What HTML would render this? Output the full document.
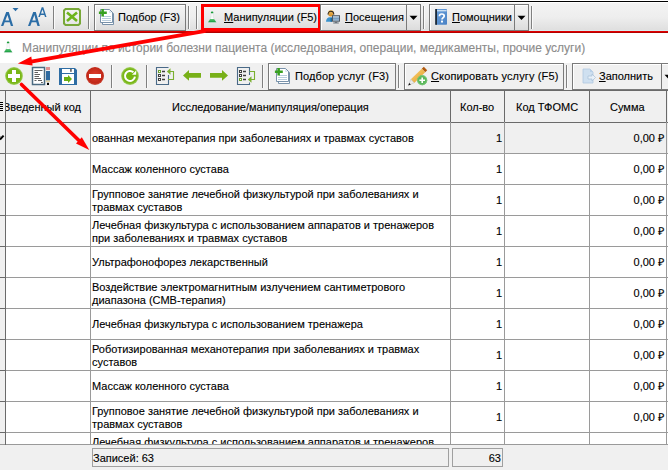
<!DOCTYPE html>
<html><head><meta charset="utf-8">
<style>
*{margin:0;padding:0;box-sizing:border-box}
html,body{width:668px;height:470px;overflow:hidden;background:#fff}
body{position:relative;font-family:"Liberation Sans",sans-serif;font-size:11px;color:#000}
.a{position:absolute}
#tb1{left:0;top:3px;width:668px;height:28px;background:linear-gradient(#f3f3f3,#eeeeee 50%,#dedede)}
.sep{position:absolute;background:#808080;border-right:1px solid #fafafa;width:2px}
.btn{position:absolute;border:1px solid #7a7a7a;background:linear-gradient(#f4f4f4,#ebebeb 50%,#dcdcdc);box-shadow:inset 1px 1px 0 #fff}
.t{position:absolute;white-space:pre;line-height:13px;-webkit-text-stroke-width:0.12px}
u{text-decoration:underline;text-decoration-thickness:1px;text-underline-offset:1px}
#grid{left:0;top:90px;width:668px;height:355px;overflow:hidden}
.hl{position:absolute;left:0;width:668px;height:1px;background:#9a9a9a}
.vl{position:absolute;top:0;width:1px;height:355px}
</style></head><body>
<!-- top border -->
<div class="a" style="left:0;top:1px;width:668px;height:1px;background:#000"></div>
<div class="a" id="tb1"></div>
<div class="a" style="left:0;top:30px;width:668px;height:1px;background:#d6ecee"></div>
<div class="a" style="left:0;top:31px;width:668px;height:1px;background:#e00000"></div>
<div class="a" style="left:0;top:32px;width:668px;height:1px;background:#b40000"></div>

<!-- toolbar 1 -->
<svg class="a" style="left:0;top:0" width="90" height="31">
<path fill="#2b6da6" fill-rule="evenodd" d="M1 26L6.2 12H8.8L13.2 26H10.9L9.7 22.2H4.7L3.3 26ZM5.3 20.6H9.2L7.42 14.9Z"/>
<path fill="#2b6da6" d="M12.5 8H18.5L15.5 11.2Z"/>
<path fill="#2b6da6" fill-rule="evenodd" d="M28 26L33.2 12H35.8L39.8 26H37.5L36.3 22.2H31.7L30.3 26ZM32.3 20.6H35.8L34.4 14.9Z"/>
<path fill="#2b6da6" fill-rule="evenodd" d="M38.3 17L41.7 7.3H43.3L46.5 17H45L44.3 14.9H40.6L39.8 17ZM41 13.6H43.9L42.5 9.4Z"/>
<path fill="none" stroke="#78a838" stroke-width="2" d="M65.5 9H78.5L80 10.5V23.5L78.5 25H65.5L64 23.5V10.5Z"/>
<path fill="none" stroke="#6cb41c" stroke-width="2.6" d="M67 12.5L77 21M77 12.5L67 21"/>
</svg>
<div class="sep" style="left:53px;top:6px;height:23px"></div>
<div class="sep" style="left:88px;top:6px;height:23px"></div>

<div class="btn" style="left:94px;top:4px;width:92px;height:27px"></div>
<svg class="a" style="left:97px;top:6px" width="20" height="22">
<path fill="#fff" stroke="#6a86a0" stroke-width="0.9" d="M5.5 5.5H14.5L16.5 7.5V18.5H5.5Z"/>
<path fill="#fff" stroke="#6a86a0" stroke-width="0.9" d="M3.5 3.5H12.5L15.5 6.5V16.5H3.5Z"/>
<path fill="#dce8f0" d="M12 4L15 7H12Z"/>
<path stroke="#b8ccdc" d="M6 10.5H14M5 12.5H14M5 14.5H14"/>
<path fill="#38a020" d="M4.4 3H6.9V5.6H9.8V8.1H6.9V10.6H4.4V8.1H1.9V5.6H4.4Z"/>
</svg>
<div class="t" style="left:118px;top:11px">Подбор (F3)</div>
<div class="sep" style="left:188px;top:6px;height:23px"></div>
<div class="sep" style="left:196px;top:6px;height:23px"></div>

<div class="btn" style="left:201px;top:4px;width:120px;height:27px;border:3px solid #ff0000;box-shadow:none"></div>
<svg class="a" style="left:204px;top:8px" width="16" height="18">
<defs><linearGradient id="fg1" x1="0" y1="0" x2="0" y2="1"><stop offset="0" stop-color="#60c878"/><stop offset="1" stop-color="#109a3a"/></linearGradient></defs>
<path fill="#fff" stroke="#d4dcdc" stroke-width="0.6" d="M7.1 5V9.2L4.2 14.4H12.2L9.1 9.2V5"/>
<ellipse cx="8.1" cy="4.4" rx="1.3" ry="0.9" fill="#1a9a3a"/>
<path fill="url(#fg1)" d="M6.1 11H10.1L12.3 14.3H4.1Z"/>
</svg>
<div class="t" style="left:224px;top:11px"><u>М</u>анипуляции (F5)</div>

<div class="btn" style="left:320px;top:4px;width:101px;height:27px"></div>
<div class="a" style="left:406px;top:4px;width:1px;height:27px;background:#7a7a7a"></div>
<svg class="a" style="left:322px;top:6px" width="22" height="22">
<defs><linearGradient id="face" x1="0" y1="0" x2="0" y2="1"><stop offset="0" stop-color="#f4c870"/><stop offset="1" stop-color="#d08a20"/></linearGradient>
<linearGradient id="scr" x1="0" y1="0" x2="0" y2="1"><stop offset="0" stop-color="#c8dcec"/><stop offset="0.5" stop-color="#7aa0c0"/><stop offset="1" stop-color="#a8c4dc"/></linearGradient></defs>
<path fill="#3a92cc" d="M4 15.8C4 13 5.5 11.4 8 11.3H10V15.8Z"/>
<path fill="#1e6a9a" d="M8.5 12H10V15.8H8.5Z"/>
<ellipse cx="8.9" cy="7.2" rx="2.9" ry="3.2" fill="url(#face)"/>
<path fill="none" stroke="#2a2420" stroke-width="1.1" d="M6 8.6A2.9 3.3 0 0 1 11.8 8.6"/>
<rect x="10" y="9.2" width="8" height="6.5" fill="#505a64"/>
<rect x="11" y="10.2" width="6" height="4.5" fill="url(#scr)"/>
<path fill="#6a747c" d="M12.8 15.7H15.2V16.6H16.8V17.6H11.2V16.6H12.8Z"/>
</svg>
<div class="t" style="left:345px;top:11px"><u>П</u>осещения</div>
<svg class="a" style="left:409px;top:15px" width="9" height="6"><path d="M0.5 0.8H8.5L4.5 5Z" fill="#000"/></svg>
<div class="sep" style="left:423px;top:6px;height:23px"></div>
<div class="btn" style="left:429px;top:4px;width:100px;height:27px"></div>
<div class="a" style="left:514px;top:4px;width:1px;height:27px;background:#7a7a7a"></div>
<svg class="a" style="left:434px;top:8px" width="14" height="18">
<defs><linearGradient id="bk" x1="0" y1="0" x2="1" y2="1"><stop offset="0" stop-color="#6aa0dc"/><stop offset="1" stop-color="#4a82c4"/></linearGradient></defs>
<rect x="1.5" y="1" width="11.5" height="15.8" rx="0.8" fill="url(#bk)"/>
<rect x="1.2" y="1" width="1.8" height="15.8" fill="#1e2a36"/>
<rect x="3" y="2.2" width="9.6" height="1.1" fill="#e0eef8"/>
<path fill="none" stroke="#fff" stroke-width="1.7" d="M5.4 8.2C5.4 6.6 6.4 6 7.8 6S10.2 6.8 10.2 8C10.2 9.6 8 9.6 8 11.6"/>
<rect x="7" y="12.6" width="2" height="1.9" fill="#fff"/>
</svg>
<div class="t" style="left:452px;top:11px"><u>П</u>омощники</div>
<svg class="a" style="left:517px;top:15px" width="9" height="6"><path d="M0.5 0.8H8.5L4.5 5Z" fill="#000"/></svg>
<div class="sep" style="left:531px;top:6px;height:23px"></div>

<!-- title -->
<svg class="a" style="left:0px;top:38px" width="16" height="18">
<defs><linearGradient id="fg2" x1="0" y1="0" x2="0" y2="1"><stop offset="0" stop-color="#60c878"/><stop offset="1" stop-color="#109a3a"/></linearGradient></defs>
<path fill="#fff" stroke="#d4dcdc" stroke-width="0.6" d="M7.1 5V9.2L4.2 14.4H12.2L9.1 9.2V5"/>
<ellipse cx="8.1" cy="4.4" rx="1.3" ry="0.9" fill="#1a9a3a"/>
<path fill="url(#fg2)" d="M6.1 11H10.1L12.3 14.3H4.1Z"/>
</svg>
<div class="t" style="left:22px;top:41px;font-size:12px;line-height:14px;color:#8c8c8c">Манипуляции по истории болезни пациента (исследования, операции, медикаменты, прочие услуги)</div>

<!-- toolbar 2 -->
<div class="a" style="left:0;top:63px;width:668px;height:27px;background:#f0f0f0"></div>
<svg class="a" style="left:0;top:63px" width="262" height="27">
<defs>
<radialGradient id="gg" cx="0.5" cy="0.5" r="0.5"><stop offset="0" stop-color="#74b80c"/><stop offset="0.8" stop-color="#7ab618"/><stop offset="1" stop-color="#a0d060"/></radialGradient>
<radialGradient id="rg" cx="0.5" cy="0.45" r="0.55"><stop offset="0" stop-color="#e04030"/><stop offset="0.8" stop-color="#c02818"/><stop offset="1" stop-color="#d05040"/></radialGradient>
</defs>
<circle cx="14" cy="13" r="8.9" fill="url(#gg)"/>
<path fill="#fff" d="M12 7H16V11H20V15H16V19H12V15H8V11H12Z"/>
<rect x="32.5" y="4.5" width="12" height="17" fill="#fff" stroke="#4a6a80" stroke-width="1.5"/>
<path stroke="#606060" stroke-width="1" d="M34.5 7.5H42.5M34.5 9.5H38M34.5 11.5H40M34.5 13.5H39M34.5 15.5H41M34.5 17.5H36.5M38 17.5H42M41 19.5H42.8"/>
<rect x="46" y="4" width="4" height="3" fill="#e09090"/>
<rect x="46" y="8" width="4" height="9.5" fill="#2e6aa0"/>
<path fill="#e0d0a0" d="M46 17.5H50V19H46Z"/>
<rect x="47" y="19.8" width="2" height="2.2" fill="#000"/>
<path fill="#2e6da4" d="M59 5H75L77 7V22H59Z"/>
<rect x="62" y="6" width="12" height="4" fill="#fff"/>
<rect x="62" y="11" width="12" height="10" fill="#fff"/>
<rect x="70" y="6" width="1.8" height="2.8" fill="#707070"/>
<path fill="#6ab010" d="M64 14H68V12L72 16L68 20V18H64Z"/>
<circle cx="95" cy="13" r="9" fill="url(#rg)"/>
<rect x="89" y="11" width="12" height="4" fill="#fff"/>
<circle cx="130" cy="13" r="8.9" fill="url(#gg)"/>
<path fill="none" stroke="#fff" stroke-width="2" d="M134.95 13.7A5 5 0 1 1 133.4 9.3"/>
<path fill="#fff" d="M136.2 7.6V11.8H132Z"/>
<path fill="none" stroke="#4a6a88" stroke-width="1.1" d="M168.5 4.5H156.5V21.5H168.5V12"/>
<rect x="158.5" y="7.5" width="2" height="2" fill="#fff" stroke="#6aa030" stroke-width="1"/>
<rect x="158.5" y="11.5" width="2" height="2" fill="#fff" stroke="#404040" stroke-width="1"/>
<rect x="158.5" y="15.5" width="2" height="2" fill="#fff" stroke="#404040" stroke-width="1"/>
<path stroke="#404040" stroke-width="1.3" d="M162 8.5H165M162 12.5H165M162 16.5H165"/>
<path fill="none" stroke="#7ab030" stroke-width="1.1" d="M170 8.5H173.5V16.5H168"/>
<path fill="#7ab030" d="M166.8 8.5L170.5 5.3V11.7Z"/>
<path fill="#78b018" d="M183 12.4L189 7V10.1H201V14.8H189V17.8Z"/>
<path fill="#78b018" d="M228 12.4L222 7V10.1H210V14.8H222V17.8Z"/>
<path fill="none" stroke="#4a6a88" stroke-width="1.1" d="M249.5 12V4.5H237.5V21.5H249.5V19.5"/>
<rect x="239.5" y="7.5" width="2" height="2" fill="#fff" stroke="#404040" stroke-width="1"/>
<rect x="239.5" y="11.5" width="2" height="2" fill="#fff" stroke="#404040" stroke-width="1"/>
<rect x="239.5" y="15.5" width="2" height="2" fill="#fff" stroke="#6aa030" stroke-width="1"/>
<path stroke="#404040" stroke-width="1.3" d="M243 8.5H246M243 12.5H246M243 16.5H246"/>
<path fill="none" stroke="#7ab030" stroke-width="1.1" d="M249.5 8.5H254.5V16.5H251"/>
<path fill="#7ab030" d="M247.8 16.5L251.5 13.3V19.7Z"/>
</svg>
<div class="sep" style="left:111px;top:65px;height:23px"></div>
<div class="sep" style="left:146px;top:65px;height:23px"></div>
<div class="sep" style="left:262px;top:65px;height:23px"></div>

<div class="btn" style="background:#f0f0f0;left:268px;top:63px;width:128px;height:27px"></div>
<svg class="a" style="left:273px;top:65px" width="20" height="22">
<path fill="#fff" stroke="#6a86a0" stroke-width="0.9" d="M5.5 5.5H14.5L16.5 7.5V18.5H5.5Z"/>
<path fill="#fff" stroke="#6a86a0" stroke-width="0.9" d="M3.5 3.5H12.5L15.5 6.5V16.5H3.5Z"/>
<path fill="#dce8f0" d="M12 4L15 7H12Z"/>
<path stroke="#b8ccdc" d="M6 10.5H14M5 12.5H14M5 14.5H14"/>
<path fill="#38a020" d="M4.4 3H6.9V5.6H9.8V8.1H6.9V10.6H4.4V8.1H1.9V5.6H4.4Z"/>
</svg>
<div class="t" style="left:295px;top:70px;letter-spacing:0.13px">Подбор услуг (F3)</div>
<div class="sep" style="left:398px;top:65px;height:23px"></div>
<div class="btn" style="background:#f0f0f0;left:404px;top:63px;width:160px;height:27px"></div>
<svg class="a" style="left:406px;top:65px" width="24" height="24">
<defs><linearGradient id="pb" x1="0" y1="0" x2="1" y2="1"><stop offset="0" stop-color="#fcd070"/><stop offset="1" stop-color="#e0a030"/></linearGradient></defs>
<path fill="#b05a10" d="M21.2 5.3L17.8 1.7L15.8 3.7L19.2 7.2Z"/>
<path fill="url(#pb)" d="M19.2 7.2L15.8 3.7L4.8 14.3L8.2 17.9Z"/>
<path fill="#ececec" stroke="#b8b8b8" stroke-width="0.5" d="M4.8 14.3L8.2 17.9L2.5 20.2Z"/>
<path fill="#111" d="M2.2 20.5L3.2 17.9L4.9 19.4Z"/>
<circle cx="16.2" cy="15.2" r="5" fill="#5cb85c"/>
<circle cx="16.2" cy="15.2" r="4.6" fill="none" stroke="#7cc87c" stroke-width="0.8"/>
<path fill="#fff" d="M15.4 12.4H17V14.4H19V16H17V18H15.4V16H13.4V14.4H15.4Z"/>
</svg>
<div class="t" style="left:431px;top:70px;letter-spacing:0.14px"><u>С</u>копировать услугу (F5)</div>
<div class="sep" style="left:566px;top:65px;height:23px"></div>
<div class="btn" style="background:#f0f0f0;left:572px;top:63px;width:100px;height:27px"></div>
<div class="a" style="left:661px;top:63px;width:1px;height:27px;background:#7a7a7a"></div>
<svg class="a" style="left:580px;top:65px" width="18" height="22">
<path fill="#cfe0f0" stroke="#b0c8e0" stroke-width="0.8" d="M3 4H10L13 7V18H3Z"/>
<path fill="#b8d0e8" d="M10 4L13 7H10Z"/>
<path fill="#e8f0f8" stroke="#a8c0d8" stroke-width="0.7" d="M8 11H12V9L15.5 12.5L12 16V14H8Z"/>
</svg>
<div class="t" style="left:599px;top:70px"><u>З</u>аполнить</div>
<svg class="a" style="left:664px;top:74px" width="9" height="6"><path d="M0.5 0.8H8.5L4.5 5Z" fill="#000"/></svg>

<!-- grid -->
<div class="a" id="grid">
<div class="a" style="left:0;top:0;width:668px;height:32px;background:#f0f0f0"></div>
<div class="a" style="left:0;top:32px;width:668px;height:31px;background:#f0f0f0"></div>
<div class="a" style="left:91px;top:33px;width:359px;height:30px;background:#fff"></div>
<div class="a" style="left:0;top:0;width:5px;height:355px;background:#f0f0f0"></div>
<div class="a" style="left:6px;top:0;width:84px;height:32px;overflow:hidden"><div class="t" style="left:-3px;top:11px">Введенный код</div></div>
<div class="t" style="left:172px;top:11px">Исследование/манипуляция/операция</div>
<div class="t" style="left:460px;top:11px">Кол-во</div>
<div class="t" style="left:516px;top:11px">Код ТФОМС</div>
<div class="t" style="left:610px;top:11px">Сумма</div>
<div class="t" style="left:92px;top:42px">ованная механотерапия при заболеваниях и травмах суставов</div>
<div class="t" style="left:452px;top:42px;width:50px;text-align:right">1</div>
<div class="t" style="left:590px;top:42px;width:74px;text-align:right">0,00 ₽</div>
<div class="t" style="left:92px;top:73px">Массаж коленного сустава</div>
<div class="t" style="left:452px;top:73px;width:50px;text-align:right">1</div>
<div class="t" style="left:590px;top:73px;width:74px;text-align:right">0,00 ₽</div>
<div class="t" style="left:92px;top:98px">Групповое занятие лечебной физкультурой при заболеваниях и<br>травмах суставов</div>
<div class="t" style="left:452px;top:104px;width:50px;text-align:right">1</div>
<div class="t" style="left:590px;top:104px;width:74px;text-align:right">0,00 ₽</div>
<div class="t" style="left:92px;top:129px">Лечебная физкультура с использованием аппаратов и тренажеров<br>при заболеваниях и травмах суставов</div>
<div class="t" style="left:452px;top:135px;width:50px;text-align:right">1</div>
<div class="t" style="left:590px;top:135px;width:74px;text-align:right">0,00 ₽</div>
<div class="t" style="left:92px;top:166px">Ультрафонофорез лекарственный</div>
<div class="t" style="left:452px;top:166px;width:50px;text-align:right">1</div>
<div class="t" style="left:590px;top:166px;width:74px;text-align:right">0,00 ₽</div>
<div class="t" style="left:92px;top:191px">Воздействие электромагнитным излучением сантиметрового<br>диапазона (СМВ-терапия)</div>
<div class="t" style="left:452px;top:197px;width:50px;text-align:right">1</div>
<div class="t" style="left:590px;top:197px;width:74px;text-align:right">0,00 ₽</div>
<div class="t" style="left:92px;top:228px">Лечебная физкультура с использованием тренажера</div>
<div class="t" style="left:452px;top:228px;width:50px;text-align:right">1</div>
<div class="t" style="left:590px;top:228px;width:74px;text-align:right">0,00 ₽</div>
<div class="t" style="left:92px;top:253px">Роботизированная механотерапия при заболеваниях и травмах<br>суставов</div>
<div class="t" style="left:452px;top:259px;width:50px;text-align:right">1</div>
<div class="t" style="left:590px;top:259px;width:74px;text-align:right">0,00 ₽</div>
<div class="t" style="left:92px;top:290px">Массаж коленного сустава</div>
<div class="t" style="left:452px;top:290px;width:50px;text-align:right">1</div>
<div class="t" style="left:590px;top:290px;width:74px;text-align:right">0,00 ₽</div>
<div class="t" style="left:92px;top:315px">Групповое занятие лечебной физкультурой при заболеваниях и<br>травмах суставов</div>
<div class="t" style="left:452px;top:321px;width:50px;text-align:right">1</div>
<div class="t" style="left:590px;top:321px;width:74px;text-align:right">0,00 ₽</div>
<div class="t" style="left:92px;top:346px">Лечебная физкультура с использованием аппаратов и тренажеров<br>при заболеваниях и травмах суставов</div>
<div class="t" style="left:452px;top:352px;width:50px;text-align:right">1</div>
<div class="t" style="left:590px;top:352px;width:74px;text-align:right">0,00 ₽</div>
<svg class="a" style="left:0;top:0" width="5" height="60"><path stroke="#000" d="M0 12.5H3M0 14.5H3M0 16.5H3M0 18.5H3M0 20.5H3"/><path stroke="#000" stroke-width="2" d="M0 49.5L3.6 45.6"/><path stroke="#666" stroke-width="1" d="M0 47.5L1.5 46"/></svg>
<div class="hl" style="top:0;background:#6a6a6a"></div>
<div class="hl" style="top:32px;background:#6a6a6a"></div>
<div class="hl" style="top:63px"></div>
<div class="a" style="left:0;top:63px;width:5px;height:1px;background:#6a6a6a"></div>
<div class="hl" style="top:94px"></div>
<div class="a" style="left:0;top:94px;width:5px;height:1px;background:#6a6a6a"></div>
<div class="hl" style="top:125px"></div>
<div class="a" style="left:0;top:125px;width:5px;height:1px;background:#6a6a6a"></div>
<div class="hl" style="top:156px"></div>
<div class="a" style="left:0;top:156px;width:5px;height:1px;background:#6a6a6a"></div>
<div class="hl" style="top:187px"></div>
<div class="a" style="left:0;top:187px;width:5px;height:1px;background:#6a6a6a"></div>
<div class="hl" style="top:218px"></div>
<div class="a" style="left:0;top:218px;width:5px;height:1px;background:#6a6a6a"></div>
<div class="hl" style="top:249px"></div>
<div class="a" style="left:0;top:249px;width:5px;height:1px;background:#6a6a6a"></div>
<div class="hl" style="top:280px"></div>
<div class="a" style="left:0;top:280px;width:5px;height:1px;background:#6a6a6a"></div>
<div class="hl" style="top:311px"></div>
<div class="a" style="left:0;top:311px;width:5px;height:1px;background:#6a6a6a"></div>
<div class="hl" style="top:342px"></div>
<div class="a" style="left:0;top:342px;width:5px;height:1px;background:#6a6a6a"></div>
<div class="hl" style="top:373px"></div>
<div class="a" style="left:0;top:373px;width:5px;height:1px;background:#6a6a6a"></div>
<div class="hl" style="top:354px"></div>
<div class="vl" style="left:5px;background:#6a6a6a"></div>
<div class="vl" style="left:90px;background:#9a9a9a"></div>
<div class="a" style="left:90px;top:0;width:1px;height:32px;background:#6a6a6a"></div>
<div class="vl" style="left:450px;background:#9a9a9a"></div>
<div class="a" style="left:450px;top:0;width:1px;height:32px;background:#6a6a6a"></div>
<div class="vl" style="left:504px;background:#9a9a9a"></div>
<div class="a" style="left:504px;top:0;width:1px;height:32px;background:#6a6a6a"></div>
<div class="vl" style="left:589px;background:#9a9a9a"></div>
<div class="a" style="left:589px;top:0;width:1px;height:32px;background:#6a6a6a"></div>
<div class="vl" style="left:666px;background:#9a9a9a"></div>
<div class="a" style="left:666px;top:0;width:1px;height:32px;background:#6a6a6a"></div>
</div>

<!-- footer -->
<div class="a" style="left:0;top:445px;width:668px;height:25px;background:#f0f0f0"></div>
<div class="a" style="left:92px;top:448px;width:357px;height:19px;border:1px solid #a0a0a0"></div>
<div class="t" style="left:93px;top:452px">Записей: 63</div>
<div class="a" style="left:452px;top:448px;width:51px;height:19px;border:1px solid #a0a0a0"></div>
<div class="t" style="left:452px;top:452px;width:49px;text-align:right">63</div>
<!-- arrows -->
<svg class="a" style="left:0;top:0" width="668" height="470">
<path d="M205.5 30.8L31 61.6" stroke="#ff0000" stroke-width="3.8" fill="none"/>
<path d="M17.8 63.4L31.3 56.6L32.6 65.6Z" fill="#ff0000"/>
<path d="M21.5 84.5L79.5 141" stroke="#ff0000" stroke-width="3.6" stroke-linecap="round" fill="none"/>
<path d="M89.3 150L76 143.5L81.8 137.2Z" fill="#ff0000"/>
</svg>
</body></html>
